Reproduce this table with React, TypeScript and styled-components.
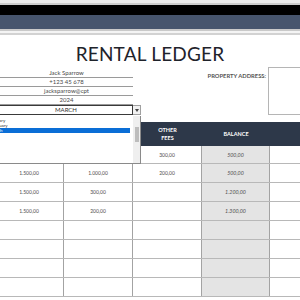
import React from 'react';
import styled, { createGlobalStyle } from 'styled-components';

const GlobalStyle = createGlobalStyle`
  html, body {
    margin: 0;
    padding: 0;
    background: #fff;
  }
  body {
    width: 300px;
    height: 300px;
    overflow: hidden;
    font-family: Lato, "Open Sans", sans-serif;
  }
`;

const months = ['January', 'February', 'March'];

interface Row {
  cells: string[];
}

const rows: Row[] = [
  { cells: ['1.500,00', '1.000,00', '300,00', '500,00'] },
  { cells: ['1.500,00', '1.000,00', '200,00', '500,00'] },
  { cells: ['1.500,00', '300,00', '', '1.200,00'] },
  { cells: ['1.500,00', '200,00', '', '1.300,00'] },
  { cells: ['', '', '', ''] },
  { cells: ['', '', '', ''] },
  { cells: ['', '', '', ''] },
  { cells: ['', '', '', ''] },
];

const App: React.FC = () => {
  return (
    <Page>
      <GlobalStyle />
      <Chrome>
        <Stripe $h={3} $c="#ececec" />
        <Stripe $h={2} $c="#cdcdcd" />
        <Stripe $h={10} $c="#000000" />
        <Stripe $h={14} $c="#47556d" />
        <Stripe $h={2} $c="#c9c9c9" />
        <Stripe $h={2} $c="#f4f4f4" />
        <Stripe $h={2} $c="#d2d2d2" />
      </Chrome>

      <Title>RENTAL LEDGER</Title>

      <InfoSection>
        <InfoColumn>
          <InfoRow>Jack Sparrow</InfoRow>
          <InfoRow>+123 45 678</InfoRow>
          <InfoRow>jacksparrow@cpt</InfoRow>
          <InfoRow>2024</InfoRow>
          <SelectRow>
            <SelectCell>MARCH</SelectCell>
            <SelectButton>
              <svg width="4" height="3" viewBox="0 0 4 3">
                <path d="M0 0 L4 0 L2 3 Z" fill="#444" />
              </svg>
            </SelectButton>
          </SelectRow>
          <DropList>
            <ListItems>
              {months.map((m) => (
                <ListItem key={m} $active={m === 'March'}>
                  {m}
                </ListItem>
              ))}
            </ListItems>
            <ScrollTrack>
              <ScrollThumb />
            </ScrollTrack>
          </DropList>
        </InfoColumn>
        <AddressLabel>PROPERTY ADDRESS:</AddressLabel>
        <AddressBox />
      </InfoSection>

      <Table>
        <HeaderRow>
          <HeadCell>RENT<br />DUE</HeadCell>
          <HeadCell>RENT<br />PAID</HeadCell>
          <HeadCell>OTHER<br />FEES</HeadCell>
          <HeadCell>BALANCE</HeadCell>
          <HeadCell />
        </HeaderRow>
        {rows.map((r, i) => (
          <DataRow key={i} $first={i === 0}>
            <Cell>{r.cells[0]}</Cell>
            <Cell>{r.cells[1]}</Cell>
            <Cell>{r.cells[2]}</Cell>
            <BalanceCell>{r.cells[3]}</BalanceCell>
            <Cell />
          </DataRow>
        ))}
      </Table>
    </Page>
  );
};

const Page = styled.div`
  width: 300px;
  height: 300px;
  overflow: hidden;
  position: relative;
`;

const Chrome = styled.div`
  display: flex;
  flex-direction: column;
`;

const Stripe = styled.div<{ $h: number; $c: string }>`
  height: ${(p) => p.$h}px;
  background: ${(p) => p.$c};
`;

const Title = styled.div`
  height: 32px;
  display: flex;
  align-items: center;
  justify-content: center;
  font-size: 19px;
  color: #1f232b;
  letter-spacing: 0.2px;
  padding-top: 4px;
  box-sizing: border-box;
`;

const InfoSection = styled.div`
  display: grid;
  grid-template-columns: 141px 1fr auto 32px;
  column-gap: 2px;
  height: 49px;
  position: relative;
  z-index: 2;
`;

const InfoColumn = styled.div`
  position: relative;
  display: flex;
  flex-direction: column;
  padding-top: 2px;
`;

const InfoRow = styled.div`
  width: 133px;
  height: 9px;
  box-sizing: border-box;
  border-bottom: 1px solid #9a9a9a;
  font-size: 6px;
  line-height: 8px;
  text-align: center;
  color: #4a4a4a;
`;

const SelectRow = styled.div`
  display: flex;
  height: 10px;
`;

const SelectCell = styled.div`
  width: 133px;
  box-sizing: border-box;
  border: 1px solid #3a3a3a;
  border-left: none;
  font-size: 6px;
  line-height: 8px;
  text-align: center;
  color: #333;
`;

const SelectButton = styled.div`
  width: 8px;
  box-sizing: border-box;
  border: 1px solid #a0a0a0;
  border-left: none;
  background: #f2f2f2;
  display: flex;
  align-items: center;
  justify-content: center;
`;

const DropList = styled.div`
  position: absolute;
  top: 100%;
  left: -40px;
  width: 181px;
  height: 48px;
  box-sizing: border-box;
  background: #fff;
  border: 1px solid #8a8a8a;
  border-top: none;
  display: flex;
  overflow: hidden;
`;

const ListItems = styled.div`
  flex: 1;
  padding-top: 2px;
  display: flex;
  flex-direction: column;
`;

const ListItem = styled.div<{ $active: boolean }>`
  height: 5px;
  flex-shrink: 0;
  margin-right: 3px;
  padding-left: 29px;
  font-size: 4.5px;
  line-height: 5px;
  color: ${(p) => (p.$active ? '#fff' : '#333')};
  background: ${(p) => (p.$active ? '#0a6ed6' : 'transparent')};
`;

const ScrollTrack = styled.div`
  width: 7px;
  background: #efefef;
  display: flex;
  justify-content: center;
  padding-top: 11px;
`;

const ScrollThumb = styled.div`
  width: 4px;
  height: 15px;
  background: #bdbdbd;
`;

const AddressLabel = styled.div`
  grid-column: 3;
  padding-top: 5px;
  font-size: 5.8px;
  font-weight: 700;
  color: #555;
  white-space: nowrap;
`;

const AddressBox = styled.div`
  grid-column: 4;
  height: 48px;
  box-sizing: border-box;
  border: 1px solid #b5b5b5;
  border-right: none;
`;

const Table = styled.div`
  margin-top: 6px;
  margin-left: -5px;
  width: 310px;
`;

const columns = '69px 69px 69px 68px 1fr';

const HeaderRow = styled.div`
  display: grid;
  grid-template-columns: ${columns};
  height: 24px;
  background: #2d3849;
`;

const HeadCell = styled.div`
  display: flex;
  align-items: center;
  justify-content: center;
  text-align: center;
  color: #fff;
  font-size: 5.5px;
  font-weight: 700;
  line-height: 8px;
`;

const DataRow = styled.div<{ $first: boolean }>`
  display: grid;
  grid-template-columns: ${columns};
  height: ${(p) => (p.$first ? 18 : 19)}px;
  box-sizing: border-box;
  border-bottom: 1px solid #b8b8b8;
`;

const Cell = styled.div`
  border-right: 1px solid #a3a3a3;
  display: flex;
  align-items: center;
  justify-content: center;
  font-size: 5px;
  color: #4d4d4d;
`;

const BalanceCell = styled(Cell)`
  background: #e4e4e4;
  font-style: italic;
  color: #505050;
  font-size: 5.3px;
`;

export default App;
